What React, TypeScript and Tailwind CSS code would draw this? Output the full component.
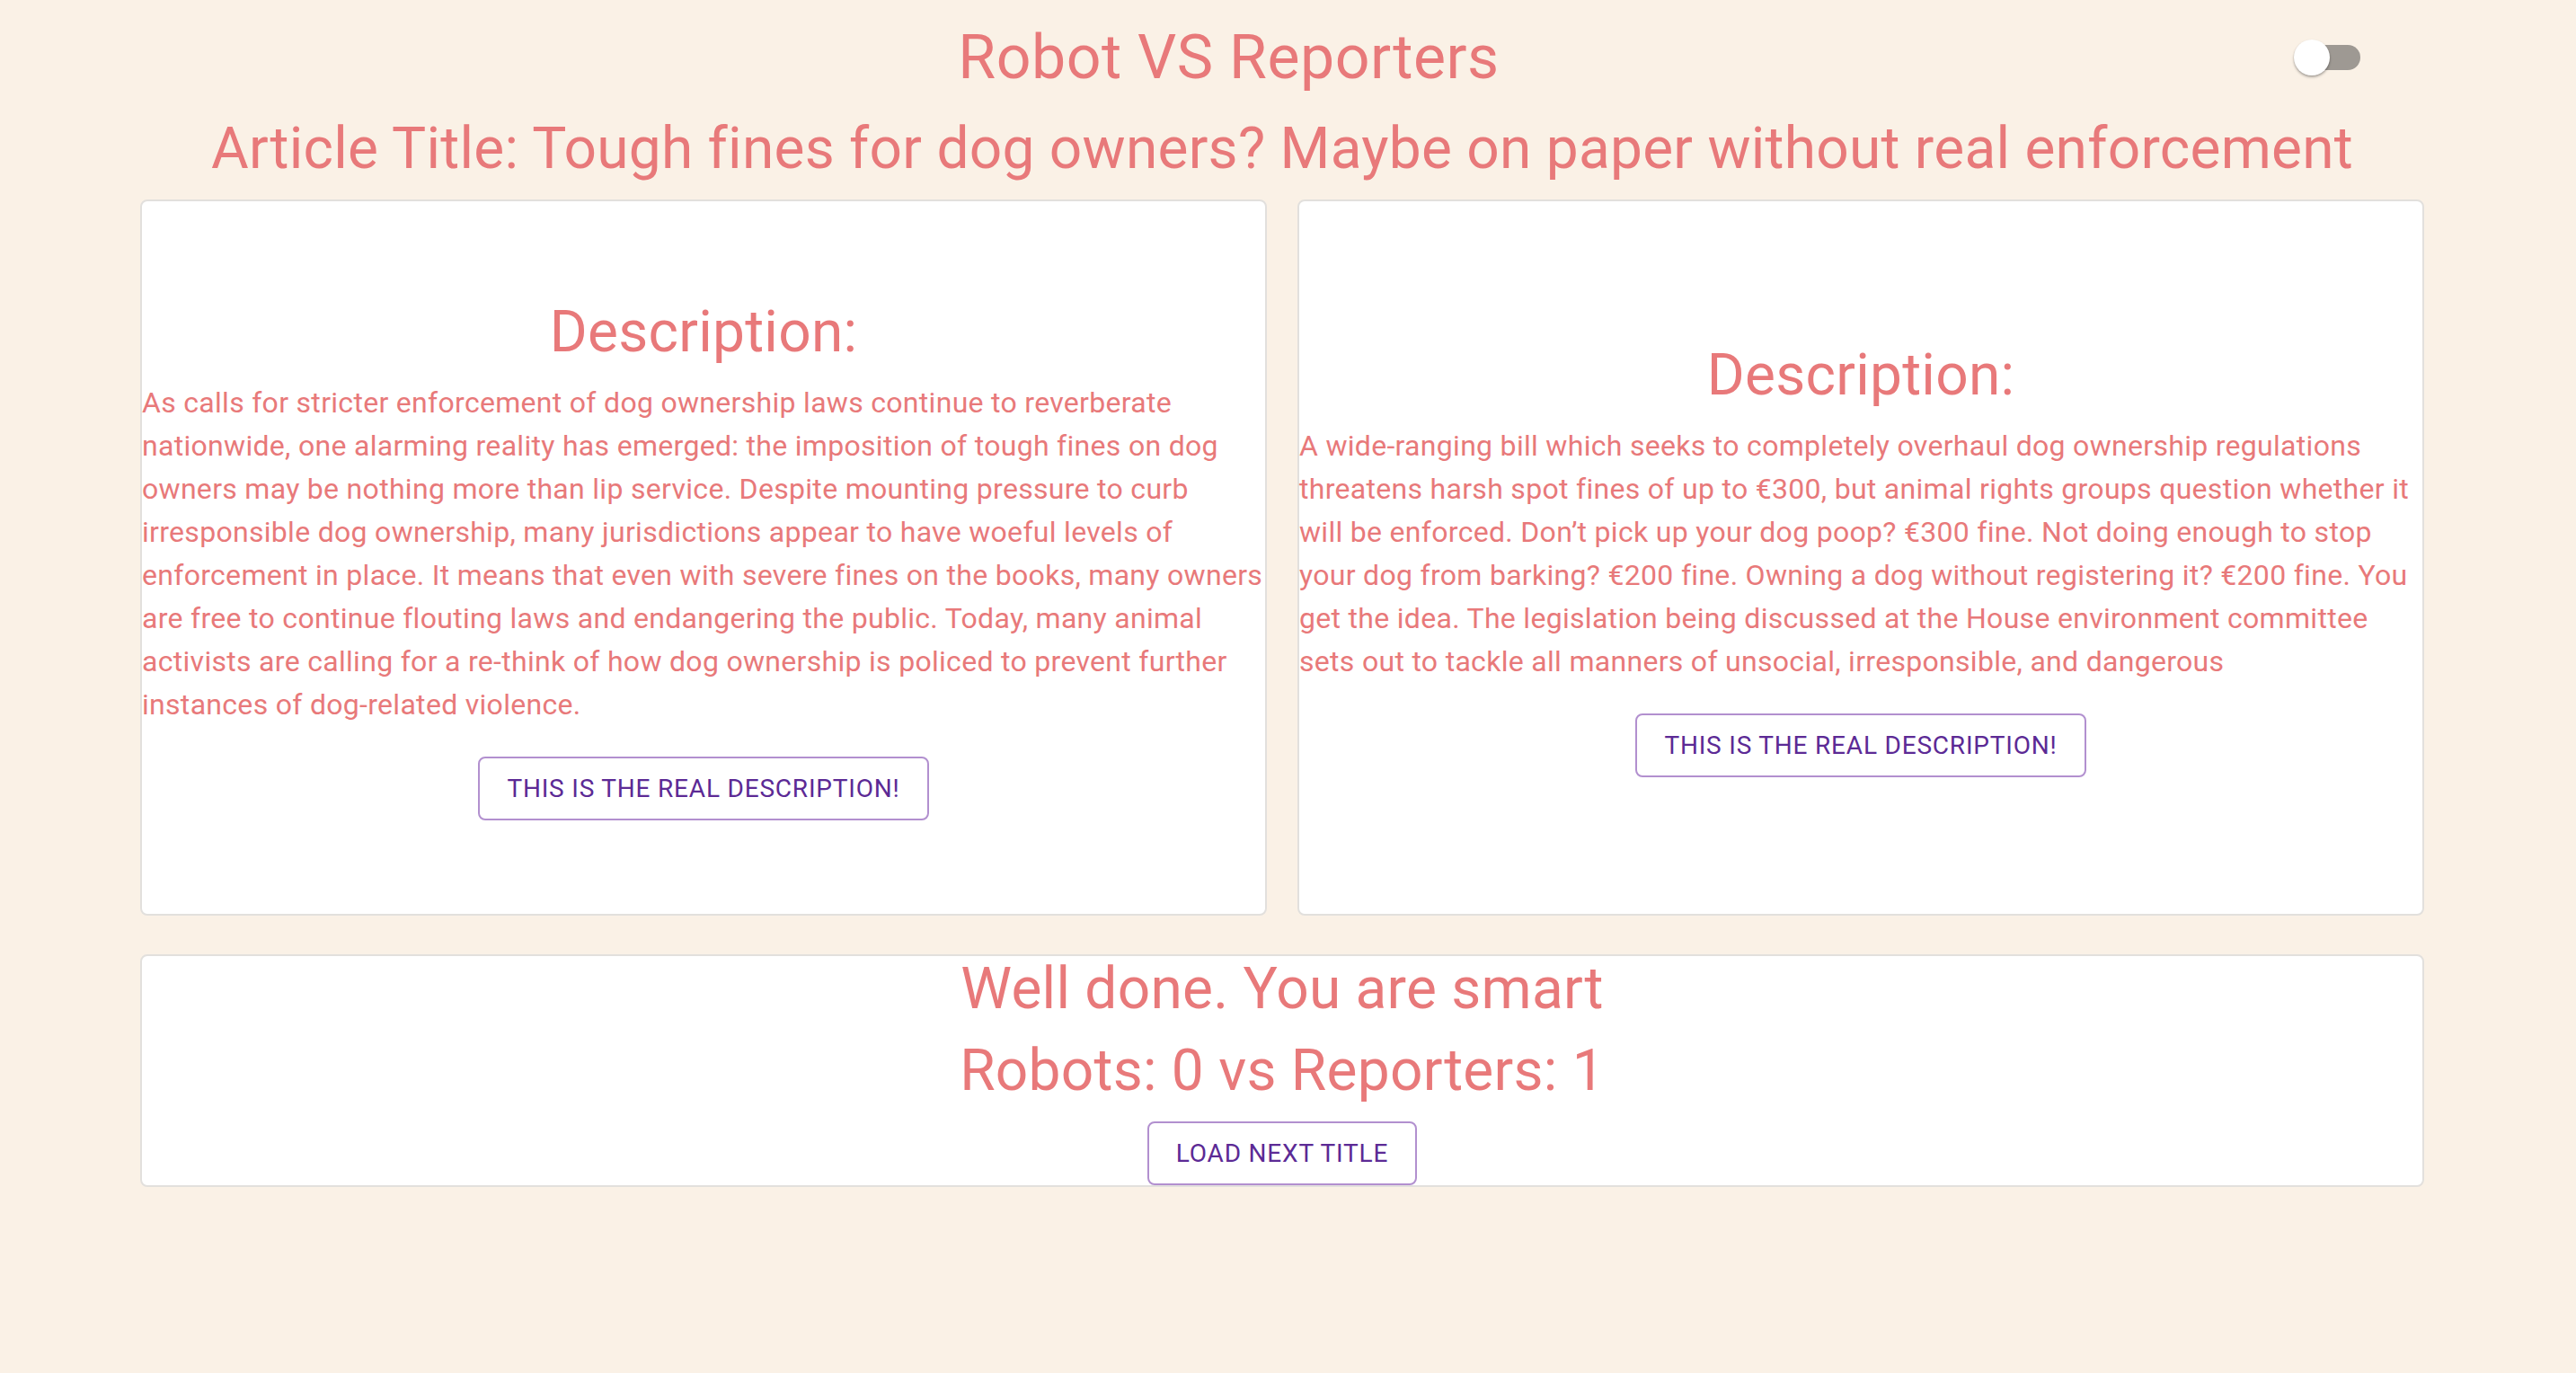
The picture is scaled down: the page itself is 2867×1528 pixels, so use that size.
import { useState } from 'react';

const leftText =
  'As calls for stricter enforcement of dog ownership laws continue to reverberate nationwide, one alarming reality has emerged: the imposition of tough fines on dog owners may be nothing more than lip service. Despite mounting pressure to curb irresponsible dog ownership, many jurisdictions appear to have woeful levels of enforcement in place. It means that even with severe fines on the books, many owners are free to continue flouting laws and endangering the public. Today, many animal activists are calling for a re-think of how dog ownership is policed to prevent further instances of dog-related violence.';

const rightText =
  'A wide-ranging bill which seeks to completely overhaul dog ownership regulations threatens harsh spot fines of up to €300, but animal rights groups question whether it will be enforced. Don’t pick up your dog poop? €300 fine. Not doing enough to stop your dog from barking? €200 fine. Owning a dog without registering it? €200 fine. You get the idea. The legislation being discussed at the House environment committee sets out to tackle all manners of unsocial, irresponsible, and dangerous';

function OutlinedButton({ label, onClick }: { label: string; onClick?: () => void }) {
  return (
    <button
      onClick={onClick}
      className="h-[71px] px-[30px] border-2 border-[#b290cf] rounded-[8px] bg-white text-[#5c2a95] text-[28px] font-normal uppercase tracking-[0.8px] leading-none"
    >
      {label}
    </button>
  );
}

function DescriptionCard({ text }: { text: string }) {
  return (
    <div className="h-[797px] bg-white border-2 border-[#e2e0dd] rounded-[8px] flex flex-col items-center justify-center">
      <h2 className="text-[64px] leading-[84px] tracking-[0.25px]">Description:</h2>
      <p className="mt-[12px] w-full text-left text-[32px] leading-[48px] tracking-[0.3px]">{text}</p>
      <div className="mt-[34px]">
        <OutlinedButton label="This is the real description!" />
      </div>
    </div>
  );
}

export default function App() {
  const [dark, setDark] = useState(false);

  return (
    <div className="min-h-screen bg-[#faf1e6] text-[#e8797a] font-['Roboto',sans-serif] pt-[22px]">
      <div className="ml-[156px] w-[2542px]">
        {/* Header */}
        <div className="flex items-center">
          <h1 className="w-[2379px] pl-[44px] text-center text-[68px] leading-[84px] tracking-[0.5px]">
            Robot VS Reporters
          </h1>
          <button
            onClick={() => setDark(!dark)}
            className="relative ml-[18px] w-[74px] h-[40px] shrink-0"
          >
            <span className="absolute left-[6px] top-[6px] w-[68px] h-[28px] rounded-full bg-[#9e9993]" />
            <span className="absolute left-0 top-0 w-[40px] h-[40px] rounded-full bg-white shadow-[0_2px_3px_rgba(0,0,0,0.25),0_1px_2px_rgba(0,0,0,0.15)]" />
          </button>
        </div>

        <h2 className="mt-[18px] text-center text-[64px] leading-[84px] tracking-[0.25px]">
          Article Title: Tough fines for dog owners? Maybe on paper without real enforcement
        </h2>

        {/* Descriptions */}
        <div className="mt-[14px] grid grid-cols-2 gap-[34px]">
          <DescriptionCard text={leftText} />
          <DescriptionCard text={rightText} />
        </div>

        {/* Result */}
        <div className="mt-[43px] bg-white border-2 border-[#e2e0dd] rounded-[8px] flex flex-col items-center">
          <h3 className="text-[64px] leading-[74px] tracking-[0.25px]">Well done. You are smart</h3>
          <h3 className="mt-[12px] text-[64px] leading-[84px] tracking-[0.25px]">Robots: 0 vs Reporters: 1</h3>
          <div className="mt-[14px]">
            <OutlinedButton label="Load next title" />
          </div>
        </div>
      </div>
    </div>
  );
}
